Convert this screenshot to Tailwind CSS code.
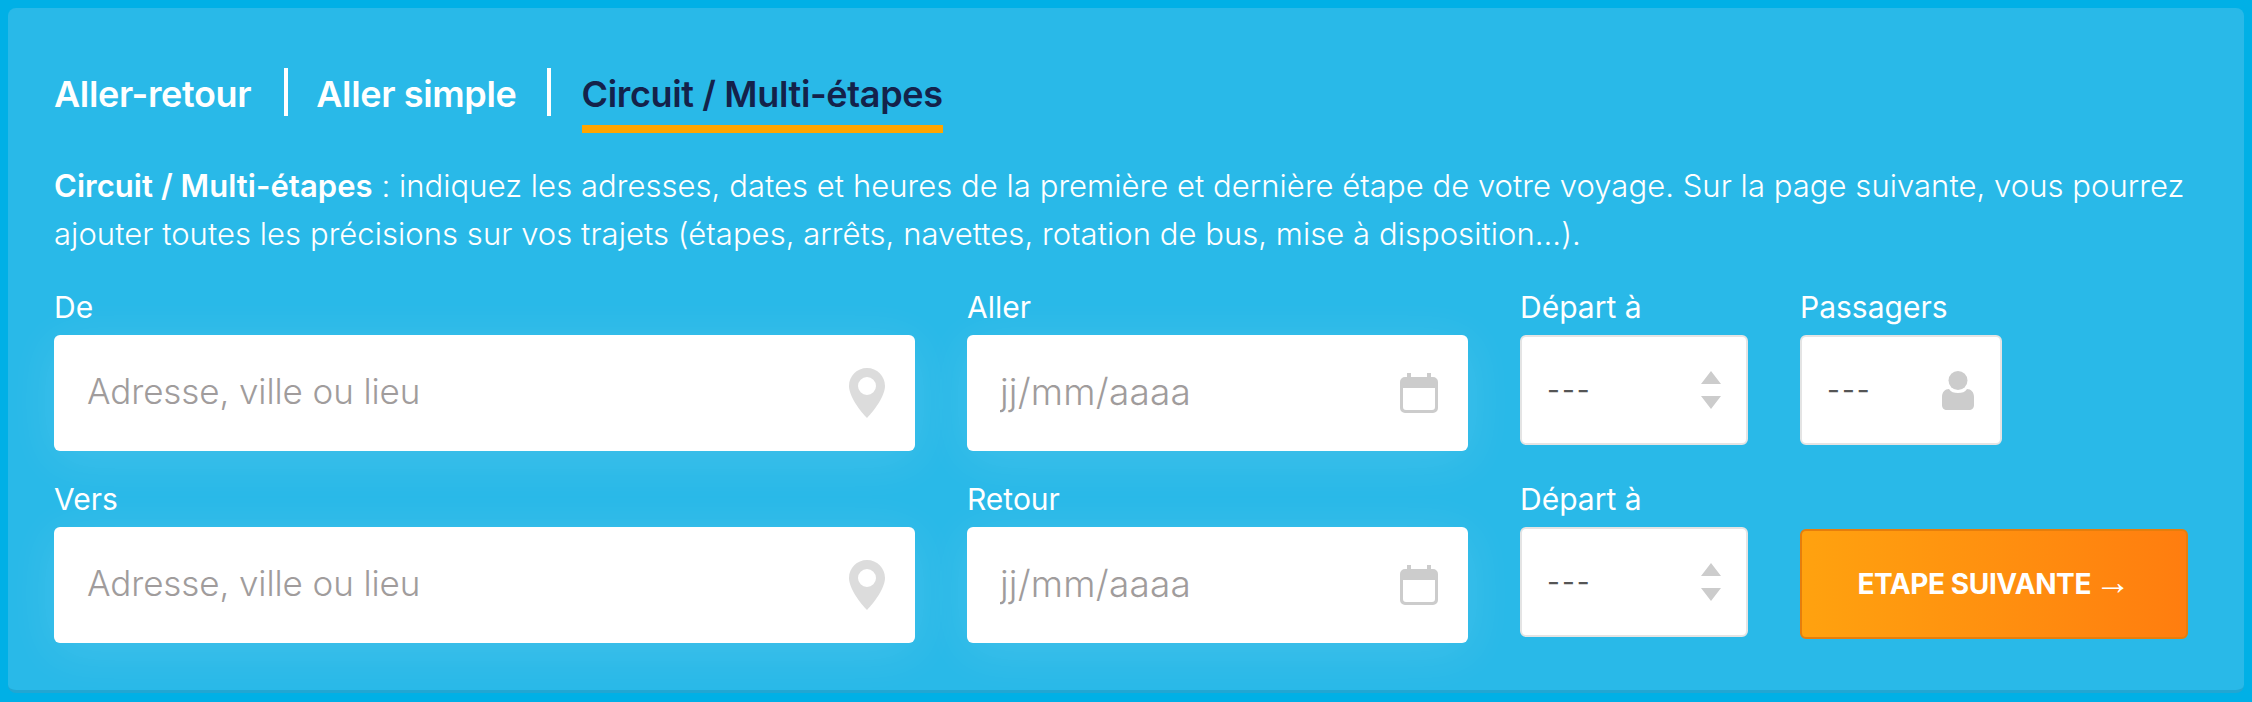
<!DOCTYPE html>
<html lang="fr">
<head>
    <meta charset="UTF-8">
    <title>Circuit / Multi-étapes</title>
    <script src="https://cdn.jsdelivr.net/npm/@tailwindcss/browser@4"></script>
</head>
<body class="bg-[#00b0e6] font-['Inter',sans-serif] overflow-hidden">
    <div class="h-[702px] p-2">
        <div class="h-[685px] bg-[#29b9e8] rounded-lg border-b-[3px] border-[#22a6d2] pl-[46px] pr-[56px] pt-[60px] text-white">
            <!-- Tabs -->
            <div class="flex items-start h-[65px] text-[36px] font-semibold tracking-[-0.35px]">
                <a class="h-12 leading-[52px] pr-[33px] border-r-4 border-white">Aller-retour</a>
                <a class="h-12 leading-[52px] pl-[28px] pr-[30px] border-r-4 border-white">Aller simple</a>
                <a class="ml-[31px] h-[65px] leading-[52px] border-b-8 border-[#ffa500] text-[#14224a]">Circuit / Multi-étapes</a>
            </div>
            <!-- Intro -->
            <p class="mt-[29px] text-[31px] leading-[48px] font-light tracking-[0.05px]">
                <b class="font-semibold">Circuit / Multi-étapes</b> : indiquez les adresses, dates et heures de la première et dernière étape de votre voyage. Sur la page suivante, vous pourrez ajouter toutes les précisions sur vos trajets (étapes, arrêts, navettes, rotation de bus, mise à disposition...).
            </p>
            <!-- Row 1 -->
            <div class="mt-[33px] flex gap-[52px] items-start">
                <div class="w-[861px]">
                    <label class="block h-[44px] text-[30px] leading-[32px]">De</label>
                    <div class="flex items-center h-[116px] bg-white rounded-md pl-[33px] pr-[30px] shadow-[0_8px_50px_rgba(255,255,255,0.12)]">
                        <input class="mb-[3px] flex-1 outline-none text-[35px] tracking-[-0.1px] font-light text-[#555] placeholder:text-[#a09c9c]" placeholder="Adresse, ville ou lieu">
                        <svg class="w-9 h-[50px] text-[#dcdcdc]" viewBox="0 0 36 50" fill="currentColor"><path fill-rule="evenodd" d="M18 0C8 0 0 8 0 18c0 10 11 25 18 32 7-7 18-22 18-32C36 8 28 0 18 0zm0 9a9 9 0 1 1 0 18 9 9 0 0 1 0-18z"/></svg>
                    </div>
                </div>
                <div class="w-[501px]">
                    <label class="block h-[44px] text-[30px] leading-[32px]">Aller</label>
                    <div class="flex items-center h-[116px] bg-white rounded-md pl-[33px] pr-[30px] shadow-[0_8px_50px_rgba(255,255,255,0.12)]">
                        <input class="mb-[3px] w-full flex-1 outline-none text-[37px] tracking-[0.2px] font-light text-[#555] placeholder:text-[#a09c9c]" placeholder="jj/mm/aaaa">
                        <svg class="w-[38px] h-10 text-[#cccccc]" viewBox="0 0 38 40" fill="currentColor"><path fill-rule="evenodd" d="M7 0h4v4h16V0h4v4h2a5 5 0 0 1 5 5v26a5 5 0 0 1-5 5H5a5 5 0 0 1-5-5V9a5 5 0 0 1 5-5h2zM3 15v19a3 3 0 0 0 3 3h26a3 3 0 0 0 3-3V15z"/></svg>
                    </div>
                </div>
                <div class="w-[228px]">
                    <label class="block h-[44px] text-[30px] leading-[32px]">Départ à</label>
                    <div class="flex items-center justify-between h-[110px] bg-white rounded-md border-2 border-[#e4e4e4] pl-[25px] pr-[25px]">
                        <span class="text-[28px] text-[#555] tracking-[2px]">---</span>
                        <svg class="w-5 h-[38px] text-[#cccccc]" viewBox="0 0 20 38" fill="currentColor"><path d="M10 0l10 13H0zM0 25h20L10 38z"/></svg>
                    </div>
                </div>
                <div class="w-[202px]">
                    <label class="block h-[44px] text-[30px] leading-[32px]">Passagers</label>
                    <div class="flex items-center justify-between h-[110px] bg-white rounded-md border-2 border-[#e4e4e4] pl-[25px] pr-[26px]">
                        <span class="text-[28px] text-[#555] tracking-[2px]">---</span>
                        <svg class="w-8 h-[39px] text-[#cccccc]" viewBox="0 0 32 39" fill="currentColor"><circle cx="16" cy="9.5" r="9.5"/><path d="M7 18c2 3 5 4 9 4s7-1 9-4c4 0 7 3 7 8v8c0 3-2 5-5 5H5c-3 0-5-2-5-5v-8c0-5 3-8 7-8z"/></svg>
                    </div>
                </div>
            </div>
            <!-- Row 2 -->
            <div class="mt-8 flex gap-[52px] items-start">
                <div class="w-[861px]">
                    <label class="block h-[44px] text-[30px] leading-[32px]">Vers</label>
                    <div class="flex items-center h-[116px] bg-white rounded-md pl-[33px] pr-[30px] shadow-[0_8px_50px_rgba(255,255,255,0.12)]">
                        <input class="mb-[3px] flex-1 outline-none text-[35px] tracking-[-0.1px] font-light text-[#555] placeholder:text-[#a09c9c]" placeholder="Adresse, ville ou lieu">
                        <svg class="w-9 h-[50px] text-[#dcdcdc]" viewBox="0 0 36 50" fill="currentColor"><path fill-rule="evenodd" d="M18 0C8 0 0 8 0 18c0 10 11 25 18 32 7-7 18-22 18-32C36 8 28 0 18 0zm0 9a9 9 0 1 1 0 18 9 9 0 0 1 0-18z"/></svg>
                    </div>
                </div>
                <div class="w-[501px]">
                    <label class="block h-[44px] text-[30px] leading-[32px]">Retour</label>
                    <div class="flex items-center h-[116px] bg-white rounded-md pl-[33px] pr-[30px] shadow-[0_8px_50px_rgba(255,255,255,0.12)]">
                        <input class="mb-[3px] w-full flex-1 outline-none text-[37px] tracking-[0.2px] font-light text-[#555] placeholder:text-[#a09c9c]" placeholder="jj/mm/aaaa">
                        <svg class="w-[38px] h-10 text-[#cccccc]" viewBox="0 0 38 40" fill="currentColor"><path fill-rule="evenodd" d="M7 0h4v4h16V0h4v4h2a5 5 0 0 1 5 5v26a5 5 0 0 1-5 5H5a5 5 0 0 1-5-5V9a5 5 0 0 1 5-5h2zM3 15v19a3 3 0 0 0 3 3h26a3 3 0 0 0 3-3V15z"/></svg>
                    </div>
                </div>
                <div class="w-[228px]">
                    <label class="block h-[44px] text-[30px] leading-[32px]">Départ à</label>
                    <div class="flex items-center justify-between h-[110px] bg-white rounded-md border-2 border-[#e4e4e4] pl-[25px] pr-[25px]">
                        <span class="text-[28px] text-[#555] tracking-[2px]">---</span>
                        <svg class="w-5 h-[38px] text-[#cccccc]" viewBox="0 0 20 38" fill="currentColor"><path d="M10 0l10 13H0zM0 25h20L10 38z"/></svg>
                    </div>
                </div>
                <button class="mt-[46px] w-[388px] h-[110px] rounded-md border-2 border-[#e67e0c] bg-gradient-to-r from-[#ffa20f] to-[#ff7d0f] text-[28px] font-bold text-white tracking-[-0.4px]">ETAPE SUIVANTE<span class="ml-1 font-['Liberation_Sans',sans-serif] font-normal text-[36px] leading-none">→</span></button>
            </div>
        </div>
    </div>
</body>
</html>
